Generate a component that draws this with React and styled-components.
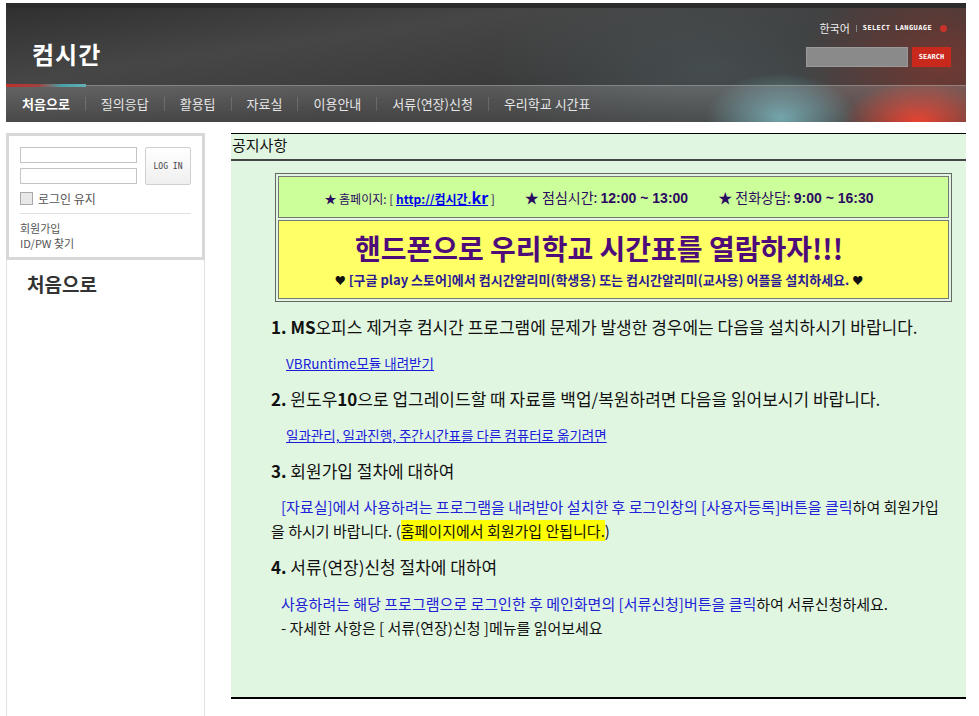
import React from 'react'
import styled, { createGlobalStyle } from 'styled-components'

const GlobalStyle = createGlobalStyle`
  body {
    margin: 0;
    background: #fff;
    font-family: "Noto Sans CJK KR", "Noto Sans", sans-serif;
  }
`;

const Page = styled.div`
  width: 960px;
  margin-left: 6px;
  padding-top: 3px;
`;

const Header = styled.header`
  height: 119px;
  display: flex;
  flex-direction: column;
  background:
    radial-gradient(ellipse 75px 45px at 775px 110px, rgba(120, 190, 200, 0.75), transparent),
    radial-gradient(ellipse 75px 40px at 912px 114px, rgba(240, 55, 35, 0.95), transparent),
    radial-gradient(ellipse 140px 100px at 935px 55px, rgba(150, 55, 45, 0.6), transparent),
    radial-gradient(ellipse 220px 90px at 700px 60px, rgba(80, 95, 100, 0.5), transparent),
    linear-gradient(172deg, #303030 0%, #464646 30%, #3a3a3a 60%, #3d3d3d 100%);
  border-top: 5px solid #2c2c2c;
  box-sizing: border-box;
`;

const Top = styled.div`
  height: 77px;
  display: flex;
  justify-content: space-between;
  align-items: flex-start;
  padding: 0 15px 0 26px;
`;

const Logo = styled.h1`
  margin: 28px 0 0;
  font-size: 24px;
  font-weight: 700;
  color: #fff;
  letter-spacing: 1px;
`;

const Utility = styled.div`
  display: flex;
  flex-direction: column;
  align-items: flex-end;
  padding-top: 12px;
  gap: 11px;
`;

const Lang = styled.div`
  display: flex;
  align-items: center;
  gap: 6px;
  color: #eee;
  font-size: 11px;
  padding-right: 4px;
`;

const Pipe = styled.span`
  width: 1px;
  height: 7px;
  background: #888;
`;

const SmallCaps = styled.span`
  font-family: "DejaVu Sans Mono", monospace;
  font-size: 7px;
  font-weight: 700;
  letter-spacing: 0.4px;
  color: #fff;
`;

const Arrow = styled.span`
  width: 7px;
  height: 7px;
  border-radius: 50%;
  background: #c8322a;
  margin-left: 2px;
`;

const SearchRow = styled.div`
  display: flex;
  gap: 4px;
`;

const SearchInput = styled.div`
  width: 100px;
  height: 18px;
  background: #8a8a8a;
  border: 1px solid #9a9a9a;
`;

const SearchButton = styled.button`
  width: 39px;
  height: 20px;
  border: none;
  padding: 0;
  background: #c9281d;
  color: #fff;
  font-family: "DejaVu Sans Mono", monospace;
  font-size: 7px;
  font-weight: 700;
`;

const Nav = styled.nav`
  flex: 1;
  display: flex;
  align-items: center;
  border-top: 1px solid rgba(200, 200, 200, 0.45);
  background: linear-gradient(to bottom, rgba(255, 255, 255, 0.16), rgba(255, 255, 255, 0.05));
  position: relative;
`;

const Accent = styled.span`
  position: absolute;
  left: 0;
  top: -2px;
  width: 80px;
  height: 3px;
  background: linear-gradient(to right, #c0302a 0%, #a04040 40%, #4aa0a8 70%, #62b0b8 100%);
`;

const NavItem = styled.a`
  padding: 0 15px;
  font-size: 13px;
  font-weight: ${p => (p.$active ? 700 : 400)};
  color: ${p => (p.$active ? '#fff' : '#e6e6e6')};
  border-left: ${p => (p.$first ? 'none' : '1px solid rgba(255,255,255,0.15)')};
  padding-left: ${p => (p.$first ? 16 : 15)}px;
  line-height: 14px;
  white-space: nowrap;
`;

const Body = styled.div`
  display: flex;
  margin-top: 11px;
  gap: 26px;
`;

const Side = styled.aside`
  width: 199px;
  min-height: 583px;
  border-left: 1px solid #e2e2e2;
  border-right: 1px solid #e2e2e2;
  box-sizing: border-box;
`;

const LoginBox = styled.div`
  margin-left: -1px;
  margin-right: -1px;
  border: 3px solid #d8d8d8;
  padding: 11px 11px 8px;
  height: 127px;
  box-sizing: border-box;
  font-size: 12px;
  color: #555;
`;

const LoginRow = styled.div`
  display: flex;
  gap: 8px;
`;

const Fields = styled.div`
  display: flex;
  flex-direction: column;
  gap: 5px;
`;

const Field = styled.div`
  width: 115px;
  height: 14px;
  border: 1px solid #c4c4c4;
  background: #fff;
`;

const LoginButton = styled.button`
  width: 47px;
  height: 38px;
  border: 1px solid #cfcfcf;
  border-radius: 2px;
  background: linear-gradient(to bottom, #fff, #efefef);
  font-family: "DejaVu Sans Mono", monospace;
  font-size: 8px;
  color: #444;
  padding: 0;
`;

const Keep = styled.label`
  display: flex;
  align-items: center;
  gap: 5px;
  margin-top: 5px;
  padding-bottom: 6px;
  border-bottom: 1px solid #e0e0e0;
`;

const Check = styled.span`
  width: 11px;
  height: 11px;
  border: 1px solid #aaa;
  background: #e8e8e8;
`;

const SideLink = styled.div`
  font-size: 11px;
  line-height: 15px;
  color: #555;
`;

const SideLinks = styled.div`
  padding-top: 7px;
`;

const SideTitle = styled.h2`
  margin: 10px 0 0 20px;
  font-size: 19px;
  font-weight: 700;
  color: #333;
`;

const Main = styled.main`
  width: 735px;
  background: #e1f6e1;
  border-top: 1px solid #000;
  border-bottom: 2px solid #000;
  height: 566px;
  box-sizing: border-box;
`;

const MainTitle = styled.div`
  height: 25px;
  padding-left: 1px;
  font-size: 15px;
  line-height: 22px;
  color: #111;
  border-bottom: 2px solid #454545;
`;

const Content = styled.div`
  padding: 12px 3px 0 41px;
`;

const Notice = styled.table`
  width: 677px;
  margin-left: 3px;
  border: 1px solid #666;
  border-spacing: 2px;
  background: #e1f6e1;
`;

const Cell = styled.td`
  border: 1px solid #777;
  background: ${p => p.$bg};
  text-align: center;
  color: #2b0b62;
  padding: 0 29px 0 0;
`;

const InfoLine = styled.div`
  height: 40px;
  display: flex;
  justify-content: center;
  align-items: center;
  gap: 30px;
  font-size: 14px;
`;

const Small = styled.span`
  font-size: 12px;
`;

const Bold = styled.b`
  font-weight: 700;
  font-family: "Liberation Sans", "Noto Sans CJK KR", sans-serif;
`;

const SiteLink = styled.a`
  color: #0000ee;
  font-weight: 700;
  text-decoration: underline;
`;

const Big = styled.span`
  font-size: 16px;
`;

const Headline = styled.div`
  font-size: 28px;
  font-weight: 700;
  color: #4d0c7a;
  padding-top: 8px;
  line-height: 38px;
`;

const SubLine = styled.div`
  font-size: 13px;
  font-weight: 700;
  color: #2a1a96;
  padding: 4px 0 9px;
  line-height: 18px;
`;

const Heart = styled.span`
  color: #111;
  font-size: 11px;
`;

const List = styled.div`
  display: flex;
  flex-direction: column;
  padding-top: 13px;
`;

const Heading = styled.div`
  font-size: 17px;
  line-height: 24px;
  color: #111;
  margin-left: -1px;
  margin-bottom: ${p => p.$mb}px;
  white-space: nowrap;
`;

const Num = styled.b`
  font-weight: 700;
`;

const DocLink = styled.a`
  align-self: flex-start;
  font-size: 13.5px;
  line-height: 18px;
  color: #1a1adb;
  text-decoration: underline;
  margin-left: 14px;
  margin-bottom: 15px;
`;

const Para = styled.p`
  margin: 0 0 ${p => p.$mb}px -1px;
  font-size: 15px;
  line-height: 23.5px;
  color: #111;
  text-indent: 10px;
`;

const Blue = styled.span`
  color: #2121d6;
`;

const Mark = styled.span`
  background: #ffff00;
`;

const Line = styled.div`
  padding-left: 10px;
  text-indent: 0;
`;

const navItems = ['처음으로', '질의응답', '활용팁', '자료실', '이용안내', '서류(연장)신청', '우리학교 시간표'];

export default function App() {
  return (
    <>
      <GlobalStyle />
      <Page>
        <Header>
          <Top>
            <Logo>컴시간</Logo>
            <Utility>
              <Lang>
                <span>한국어</span>
                <Pipe />
                <SmallCaps>SELECT LANGUAGE</SmallCaps>
                <Arrow />
              </Lang>
              <SearchRow>
                <SearchInput />
                <SearchButton>SEARCH</SearchButton>
              </SearchRow>
            </Utility>
          </Top>
          <Nav>
            <Accent />
            {navItems.map((item, i) => (
              <NavItem key={item} $active={i === 0} $first={i === 0}>{item}</NavItem>
            ))}
          </Nav>
        </Header>

        <Body>
          <Side>
            <LoginBox>
              <LoginRow>
                <Fields>
                  <Field />
                  <Field />
                </Fields>
                <LoginButton>LOG IN</LoginButton>
              </LoginRow>
              <Keep><Check />로그인 유지</Keep>
              <SideLinks>
                <SideLink>회원가입</SideLink>
                <SideLink>ID/PW 찾기</SideLink>
              </SideLinks>
            </LoginBox>
            <SideTitle>처음으로</SideTitle>
          </Side>

          <Main>
            <MainTitle>공지사항</MainTitle>
            <Content>
              <Notice>
                <tbody>
                  <tr>
                    <Cell $bg="#ccff99">
                      <InfoLine>
                        <Small>★ 홈페이지: [ <SiteLink>http://컴시간.<Big>kr</Big></SiteLink> ]</Small>
                        <span>★ 점심시간: <Bold>12:00 ~ 13:00</Bold></span>
                        <span>★ 전화상담: <Bold>9:00 ~ 16:30</Bold></span>
                      </InfoLine>
                    </Cell>
                  </tr>
                  <tr>
                    <Cell $bg="#ffff66">
                      <Headline>핸드폰으로 우리학교 시간표를 열람하자!!!</Headline>
                      <SubLine>
                        <Heart>♥</Heart> [구글 play 스토어]에서 컴시간알리미(학생용) 또는 컴시간알리미(교사용) 어플을 설치하세요. <Heart>♥</Heart>
                      </SubLine>
                    </Cell>
                  </tr>
                </tbody>
              </Notice>

              <List>
                <Heading $mb={15}><Num>1.</Num> <Num>MS</Num>오피스 제거후 컴시간 프로그램에 문제가 발생한 경우에는 다음을 설치하시기 바랍니다.</Heading>
                <DocLink>VBRuntime모듈 내려받기</DocLink>
                <Heading $mb={15}><Num>2.</Num> 윈도우<Num>10</Num>으로 업그레이드할 때 자료를 백업/복원하려면 다음을 읽어보시기 바랍니다.</Heading>
                <DocLink>일과관리, 일과진행, 주간시간표를 다른 컴퓨터로 옮기려면</DocLink>
                <Heading $mb={12}><Num>3.</Num> 회원가입 절차에 대하여</Heading>
                <Para $mb={13}>
                  <Blue>[자료실]에서 사용하려는 프로그램을 내려받아 설치한 후 로그인창의 [사용자등록]버튼을 클릭</Blue>하여 회원가입<br />을 하시기 바랍니다. (<Mark>홈페이지에서 회원가입 안됩니다.</Mark>)
                </Para>
                <Heading $mb={13}><Num>4.</Num> 서류(연장)신청 절차에 대하여</Heading>
                <Para $mb={0}>
                  <Blue>사용하려는 해당 프로그램으로 로그인한 후 메인화면의 [서류신청]버튼을 클릭</Blue>하여 서류신청하세요.
                  <Line>- 자세한 사항은 [ 서류(연장)신청 ]메뉴를 읽어보세요</Line>
                </Para>
              </List>
            </Content>
          </Main>
        </Body>
      </Page>
    </>
  )
}
